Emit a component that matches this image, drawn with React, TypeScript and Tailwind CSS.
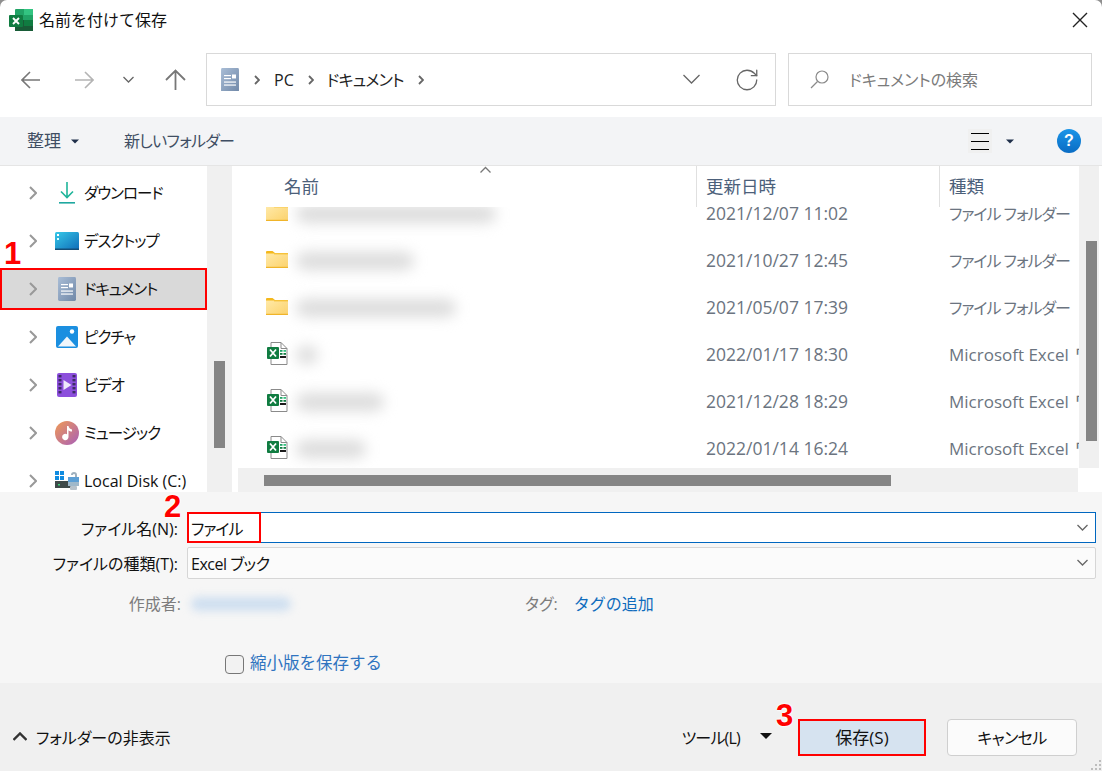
import { RotateCw } from "lucide-react"

const sidebarItems = [
  { name: "ダウンロード", icon: <DownloadIcon /> },
  { name: "デスクトップ", icon: <DesktopIcon /> },
  { name: "ドキュメント", icon: <DocIcon />, active: true },
  { name: "ピクチャ", icon: <PictureIcon /> },
  { name: "ビデオ", icon: <VideoIcon /> },
  { name: "ミュージック", icon: <MusicIcon /> },
  { name: "Local Disk (C:)", icon: <DiskIcon />, latin: true },
]

const files = [
  { kind: "folder", blur: 200, date: "2021/12/07 11:02" },
  { kind: "folder", blur: 118, date: "2021/10/27 12:45" },
  { kind: "folder", blur: 160, date: "2021/05/07 17:39" },
  { kind: "excel", blur: 22, date: "2022/01/17 18:30" },
  { kind: "excel", blur: 88, date: "2021/12/28 18:29" },
  { kind: "excel", blur: 70, date: "2022/01/14 16:24" },
]

function ExcelLogo() {
  return (
    <svg width="24" height="22" viewBox="0 0 24 22">
      <rect x="6" y="0" width="18" height="22" rx="1" fill="#21a366" />
      <rect x="15" y="0" width="9" height="6" fill="#33c481" />
      <rect x="15" y="11" width="9" height="6" fill="#107c41" />
      <rect x="6" y="11" width="9" height="11" fill="#185c37" />
      <rect x="15" y="17" width="9" height="5" fill="#185c37" />
      <rect x="0" y="6" width="14" height="12" rx="1" fill="#107c41" />
      <path d="M4 9l6 6M10 9l-6 6" stroke="#fff" strokeWidth="1.900" />
    </svg>
  )
}

function DocIcon({ size = 18 }: { size?: number }) {
  return (
    <svg width={size} height={size * 1.33} viewBox="0 0 18 24">
      <defs>
        <linearGradient id="docg" x1="0" y1="0" x2="1" y2="1">
          <stop offset="0" stopColor="#a9bdd6" />
          <stop offset="1" stopColor="#7088a8" />
        </linearGradient>
      </defs>
      <rect width="18" height="24" rx="1.500" fill="url(#docg)" />
      <rect x="3" y="7" width="7" height="1.200" fill="#fff" />
      <rect x="3" y="10" width="7" height="1.200" fill="#fff" />
      <rect x="3" y="13.500" width="12" height="1.200" fill="#fff" />
      <rect x="3" y="16.500" width="12" height="1.200" fill="#fff" />
      <rect x="11" y="6.500" width="4" height="4" fill="#fff" />
    </svg>
  )
}

function DownloadIcon() {
  return (
    <svg width="16" height="24" viewBox="0 0 16 24" fill="none">
      <path d="M8 1v15M2 10.500l6 6 6-6" stroke="#1fb59a" strokeWidth="1.600" />
      <rect y="21" width="16" height="1.600" fill="#1fa8a0" />
    </svg>
  )
}

function DesktopIcon() {
  return (
    <svg width="24" height="18" viewBox="0 0 24 18">
      <defs>
        <linearGradient id="deskg" x1="0" y1="0" x2="1" y2="1">
          <stop offset="0" stopColor="#36c8e8" />
          <stop offset="1" stopColor="#0f6cb8" />
        </linearGradient>
      </defs>
      <rect width="24" height="18" rx="1.500" fill="url(#deskg)" />
      <rect x="2" y="2" width="2" height="2" fill="#fff" />
      <rect x="2" y="6" width="2" height="2" fill="#dff" />
      <rect y="16.500" width="24" height="1.500" fill="#144e78" />
    </svg>
  )
}

function PictureIcon() {
  return (
    <svg width="22" height="22" viewBox="0 0 22 22">
      <rect width="22" height="22" rx="2" fill="#1b8fe0" />
      <circle cx="16" cy="5.500" r="2.200" fill="#fff" />
      <path d="M2 20.500 11 10.500l9 10z" fill="#f0f6fb" />
    </svg>
  )
}

function VideoIcon() {
  return (
    <svg width="20" height="24" viewBox="0 0 20 24">
      <rect width="20" height="24" rx="2" fill="#8c4fdc" />
      {[3, 7, 11, 15, 19].map((y) => (
        <g key={y}>
          <rect x="1.500" y={y - 1} width="3" height="2.400" fill="#3d2a66" />
          <rect x="15.500" y={y - 1} width="3" height="2.400" fill="#3d2a66" />
        </g>
      ))}
      <path d="M6.500 7v10l8-5z" fill="#eee8fb" />
    </svg>
  )
}

function MusicIcon() {
  return (
    <svg width="24" height="24" viewBox="0 0 24 24">
      <defs>
        <linearGradient id="musg" x1="0" y1="0" x2="1" y2="1">
          <stop offset="0" stopColor="#f09a55" />
          <stop offset="1" stopColor="#a85fb8" />
        </linearGradient>
      </defs>
      <circle cx="12" cy="12" r="12" fill="url(#musg)" />
      <path d="M12 5h1.500c.3 2 1.500 3 3.500 3.500v2c-1.500 0-2.800-.5-3.500-1.300V16a3.200 3.200 0 1 1-1.500-2.700z" fill="#fff" />
    </svg>
  )
}

function DiskIcon() {
  return (
    <svg width="24" height="20" viewBox="0 0 24 20">
      <rect x="0" y="0" width="4" height="4" fill="#0f8be0" />
      <rect x="5" y="0" width="4" height="4" fill="#0f8be0" />
      <rect x="0" y="5" width="4" height="4" fill="#0f8be0" />
      <rect x="5" y="5" width="4" height="4" fill="#0f8be0" />
      <rect y="10" width="16" height="7" fill="#3f4a4a" />
      <rect x="3" y="13" width="2" height="1.500" fill="#3fd47a" />
      <path d="M16 4a3 3 0 0 1 6 0v2h-2V4a1 1 0 0 0-2 0z" fill="#9fb0bd" />
      <rect x="13" y="6" width="11" height="5" fill="#5d9fd4" />
      <rect x="13" y="11" width="11" height="4" fill="#9fb8ca" />
      <rect x="15" y="15" width="7" height="4" rx="1" fill="#b8c2ca" />
    </svg>
  )
}

function FolderIcon({ clipped }: { clipped?: boolean }) {
  return (
    <svg width="22" height="17" viewBox="0 0 22 17">
      <defs>
        <linearGradient id="foldg" x1="0" y1="0" x2="1" y2="1">
          <stop offset="0" stopColor="#ffe9a8" />
          <stop offset="1" stopColor="#fcd26a" />
        </linearGradient>
      </defs>
      {!clipped && <path d="M0 1a1 1 0 0 1 1-1h5.500L9 2h13v4H0z" fill="#f4b81c" />}
      <rect y="2.500" width="22" height="14.500" fill="url(#foldg)" />
      <rect y="15.800" width="22" height="1.200" fill="#f0b429" />
      <rect y="2.500" x="8" width="14" height="0.800" fill="#f4b81c" />
    </svg>
  )
}

function ExcelFileIcon() {
  return (
    <svg width="21" height="23" viewBox="0 0 21 23" fill="none">
      <path d="M4 .500h10l6 6v16H4z" fill="#fff" stroke="#8a8a8a" />
      <path d="M14 .500v6h6" stroke="#8a8a8a" />
      <rect x="13" y="8" width="2.500" height="1.800" fill="#21a366" />
      <rect x="16.500" y="8" width="2.500" height="1.800" fill="#33c481" />
      <rect x="13" y="11" width="2.500" height="1.800" fill="#107c41" />
      <rect x="16.500" y="11" width="2.500" height="1.800" fill="#107c41" />
      <rect x="13" y="14" width="6" height="2" fill="#1a1a1a" />
      <rect x="0" y="5" width="12" height="12" rx="1" fill="#107c41" />
      <path d="M3 7.500l6 7M9 7.500l-6 7" stroke="#fff" strokeWidth="1.800" />
    </svg>
  )
}

function Caret({ className }: { className: string }) {
  return (
    <svg className={className} width="12" height="6" viewBox="0 0 12 6">
      <path d="M0 0h12L6 6z" fill="currentColor" />
    </svg>
  )
}

// thin open chevron pointing down, sized by width
function DownChevron({ w, className, stroke = 1.3 }: { w: number; className?: string; stroke?: number }) {
  return (
    <svg className={className} width={w} height={w / 2 + 2} viewBox={`0 0 ${w} ${w / 2 + 2}`} fill="none" stroke="currentColor" strokeWidth={stroke}>
      <path d={`M0.500 1 ${w / 2} ${w / 2 + 0.500} ${w - 0.500} 1`} />
    </svg>
  )
}

function RightChevron({ className }: { className?: string }) {
  return (
    <svg className={className} width="8" height="14" viewBox="0 0 8 14" fill="none" stroke="currentColor" strokeWidth="2">
      <path d="M1 1l6 6-6 6" />
    </svg>
  )
}

function CrumbChevron({ className }: { className?: string }) {
  return (
    <svg className={className} width="6" height="10" viewBox="0 0 6 10" fill="none" stroke="#666" strokeWidth="1.800">
      <path d="M1 1l4 4-4 4" />
    </svg>
  )
}

function Badge({ n, className }: { n: number; className: string }) {
  return (
    <span
      className={`absolute font-['Liberation_Sans',sans-serif] text-[31px] leading-none font-bold text-[#ff0000] [text-shadow:0_0_2px_#fff,0_0_2px_#fff,0_0_3px_#fff] ${className}`}
    >
      {n}
    </span>
  )
}

export default function App() {
  return (
    <div className="h-[771px] w-[1102px] bg-[#8f8f8f]">
      <div className="relative h-full w-full overflow-hidden rounded-t-[7px] bg-white font-['Open_Sans','Noto_Sans_CJK_JP',sans-serif] text-[16px] [font-feature-settings:'palt']">
        {/* Title bar */}
        <div className="flex h-10 items-center pl-[9px] pr-[14px]">
          <ExcelLogo />
          <span className="ml-[6px] flex-1 text-[#111] [font-feature-settings:normal]">名前を付けて保存</span>
          <svg width="16" height="16" viewBox="0 0 16 16" stroke="#222" strokeWidth="1.400">
            <path d="M1 1l14 14M15 1 1 15" />
          </svg>
        </div>

        {/* Nav row */}
        <div className="flex h-[77px] items-start pt-[13px] pr-[10px]">
          <div className="flex h-[53px] w-[206px] items-center text-[#777]">
            <svg className="ml-[21px]" width="19" height="18" viewBox="0 0 19 18" fill="none" stroke="currentColor" strokeWidth="1.600">
              <path d="M19 9H1M9 1 1 9l8 8" />
            </svg>
            <svg className="ml-[35px] text-[#b4b4b4]" width="19" height="18" viewBox="0 0 19 18" fill="none" stroke="currentColor" strokeWidth="1.600">
              <path d="M0 9h18M10 1l8 8-8 8" />
            </svg>
            <DownChevron w={11} className="ml-[29px] text-[#666]" />
            <svg className="ml-[31px]" width="21" height="21" viewBox="0 0 21 21" fill="none" stroke="currentColor" strokeWidth="1.800">
              <path d="M10.500 21V2M1 11l9.500-9.500L20 11" />
            </svg>
          </div>
          <div className="flex h-[53px] w-[570px] items-center border border-[#d9d9d9] pl-[14px] pr-[15px] text-[#222]">
            <DocIcon />
            <CrumbChevron className="ml-[15px]" />
            <span className="ml-[14px]">PC</span>
            <CrumbChevron className="ml-[14px]" />
            <span className="ml-[13px] tracking-[-0.8px]">ドキュメント</span>
            <CrumbChevron className="ml-[14px]" />
            <DownChevron w={17} className="ml-auto text-[#666]" />
            <RotateCw className="ml-[34px] h-[26px] w-[26px] text-[#666]" strokeWidth={1.2} />
          </div>
          <div className="ml-3 flex h-[53px] flex-1 items-center border border-[#d9d9d9] pl-[21px] text-[#7b7b7b]">
            <svg width="19" height="19" viewBox="0 0 19 19" fill="none" stroke="#8a8a8a" strokeWidth="1.200">
              <circle cx="12" cy="7" r="6" />
              <path d="M7.500 11.500 1 18" />
            </svg>
            <span className="ml-[20px]">ドキュメントの検索</span>
          </div>
        </div>

        {/* Toolbar */}
        <div className="flex h-[49px] items-center border-b border-[#e5e5e5] bg-[#f3f4f6] pl-[27px] pr-[21px] text-[#3f4e63]">
          <span className="text-[17px] [font-feature-settings:normal]">整理</span>
          <Caret className="ml-[10px] h-[5px] w-[8px] text-[#1f2f4a]" />
          <span className="ml-[45px] tracking-[-0.7px]">新しいフォルダー</span>
          <div className="ml-auto flex h-6 w-6 flex-col justify-center gap-[7px] bg-[#f0f0f0] px-[3px]">
            <div className="h-px bg-black" />
            <div className="h-px bg-black" />
            <div className="h-px bg-black" />
          </div>
          <Caret className="ml-[14px] h-[5px] w-[8px] text-[#1f2f4a]" />
          <div className="ml-[43px] flex h-6 w-6 items-center justify-center rounded-full bg-gradient-to-b from-[#1b95e8] to-[#0a6cc4] font-['Liberation_Sans',sans-serif] text-[16px] font-bold text-white">
            ?
          </div>
        </div>

        {/* Body */}
        <div className="flex h-[326px]">
          {/* Sidebar */}
          <div className="h-full w-[207px] overflow-hidden pt-[3px] text-[#111]">
            {sidebarItems.map((item) => (
              <div key={item.name} className="flex h-[48px] items-center">
                <div
                  className={
                    item.active
                      ? "flex h-[42px] w-full items-center border-2 border-[#ff0000] bg-[#d9d9d9] pl-[26px]"
                      : "flex h-[42px] w-full items-center pl-[28px]"
                  }
                >
                  <div className="flex w-[12px] justify-start pl-px">
                    <RightChevron className="text-[#999]" />
                  </div>
                  <div className="flex w-[44px] justify-center pl-[10px]">{item.icon}</div>
                  <span className={item.latin ? "whitespace-nowrap" : "mt-[2px] whitespace-nowrap text-[15.5px] tracking-[-1px]"}>{item.name}</span>
                </div>
              </div>
            ))}
          </div>

          {/* Sidebar scrollbar */}
          <div className="h-full w-[25px] bg-[#f0f0f0] pt-[195px] pl-[7px]">
            <div className="h-[87px] w-[11px] bg-[#858585]" />
          </div>

          {/* File list */}
          <div className="ml-[6px] flex h-full min-w-0 flex-1 flex-col">
            <div className="flex min-h-0 flex-1">
              <div className="flex min-w-0 flex-1 flex-col">
                <div className="relative flex h-[41px] shrink-0 text-[17.5px] text-[#4c607a] [font-feature-settings:normal]">
                  <DownChevron w={11} className="absolute left-[242px] top-0 rotate-180 text-[#777]" />
                  <div className="w-[458px] pl-[46px] pt-[7px]">名前</div>
                  <div className="w-[243px] border-l border-[#e0e0e0] pl-[9px] pt-[7px]">更新日時</div>
                  <div className="flex-1 border-l border-[#e0e0e0] pl-[9px] pt-[7px]">種類</div>
                </div>
                <div className="min-h-0 flex-1 overflow-hidden text-[#6b7480]">
                  <div className="-mt-[17px]">
                    {files.map((f, i) => (
                      <div key={f.date} className="flex h-[47px] items-center">
                        <div className="flex w-[458px] items-center pl-[28px]">
                          <div className="-mt-[2px] flex h-[22px] w-[22px] items-center justify-center">
                            {f.kind === "folder" ? <FolderIcon clipped={i === 0} /> : <ExcelFileIcon />}
                          </div>
                          <div className="ml-[8px] h-[18px] rounded-full bg-[#dcdcdc] blur-[7px]" style={{ width: f.blur }} />
                        </div>
                        <div className="w-[243px] pl-[10px] text-[17.5px] whitespace-nowrap">{f.date}</div>
                        {f.kind === "folder" ? (
                          <div className="min-w-0 flex-1 overflow-hidden pl-[10px] tracking-[-1px] whitespace-nowrap">ファイル フォルダー</div>
                        ) : (
                          <div className="min-w-0 flex-1 overflow-hidden pl-[10px] text-[17px] whitespace-nowrap">
                            Microsoft Excel <span className="ml-[2px]">ワークシート</span>
                          </div>
                        )}
                      </div>
                    ))}
                  </div>
                </div>
              </div>
              <div className="h-full w-[20px] bg-[#f0f0f0] pt-[75px] pl-[7px]">
                <div className="h-[200px] w-[11px] bg-[#858585]" />
              </div>
              <div className="w-[3px]" />
            </div>
            <div className="mr-[24px] flex h-[24px] shrink-0 items-center bg-[#f0f0f0] pl-[26px]">
              <div className="h-[11px] w-[627px] bg-[#858585]" />
            </div>
          </div>
        </div>

        {/* Form */}
        <div className="h-[191px] bg-[#f6f6f6] pt-5 text-[#111]">
          <div className="flex h-[31px] items-center">
            <span className="mt-[2px] w-[178px] text-right whitespace-nowrap">ファイル名(N):</span>
            <div className="relative ml-[9px] flex h-[31px] w-[909px] items-center border border-[#0067c0] bg-white pl-[3px] pr-[7px]">
              <span className="mt-[2px] flex-1 tracking-[-1px]">ファイル</span>
              <DownChevron w={11} className="text-[#666]" />
              <div className="absolute -left-px -top-px h-[31px] w-[74px] border-2 border-[#ff0000]" />
            </div>
          </div>
          <div className="mt-[4px] flex h-[32px] items-center">
            <span className="mt-[2px] w-[178px] text-right whitespace-nowrap">ファイルの種類(T):</span>
            <div className="ml-[9px] flex h-[32px] w-[909px] items-center rounded-[2px] border border-[#d6d6d6] bg-[#fbfbfb] pl-[3px] pr-[7px]">
              <span className="mt-[2px] flex-1 tracking-[-0.5px]">Excel ブック</span>
              <DownChevron w={11} className="text-[#666]" />
            </div>
          </div>
          <div className="mt-[9px] flex h-[32px] items-center">
            <span className="w-[181px] text-right text-[#7d7d7d] [font-feature-settings:normal]">作成者:</span>
            <div className="ml-[10px] h-[14px] w-[100px] rounded-full bg-[#cfdff0] blur-[4px]" />
            <span className="ml-[234px] text-[#7d7d7d]">タグ:</span>
            <span className="ml-[16px] text-[#0f6cbd] [font-feature-settings:normal]">タグの追加</span>
          </div>
          <div className="mt-[34px] flex h-[20px] items-center pl-[225px]">
            <div className="h-[19px] w-[19px] rounded-[4px] border border-[#777] bg-[#f2f2f2]" />
            <span className="-mt-[2px] ml-[6px] text-[16.5px] text-[#2f74c0] [font-feature-settings:normal]">縮小版を保存する</span>
          </div>
        </div>

        {/* Footer */}
        <div className="relative flex h-[88px] items-start bg-[#f0f0f0] pt-[36px] pl-[13px] pr-[25px] text-[#111]">
          <DownChevron w={14} stroke={2.4} className="mt-[13px] rotate-180 text-[#333]" />
          <span className="ml-[9px] mt-[7px]">フォルダーの非表示</span>
          <span className="ml-auto mt-[7px] tracking-[-0.8px]">ツール(L)</span>
          <Caret className="ml-[20px] mt-[14px] text-[#111]" />
          <button className="ml-[26px] h-[37px] w-[128px] border-2 border-[#ff0000] bg-[#d6e3f0] text-[17px] text-[#111] [font-feature-settings:normal]">保存(S)</button>
          <button className="ml-[21px] h-[37px] w-[130px] rounded-[4px] border border-[#cfcfcf] bg-[#fbfbfb] tracking-[-0.6px] text-[#111]">キャンセル</button>
          <svg className="absolute right-[1px] bottom-[1px]" width="10" height="10" viewBox="0 0 10 10" fill="#bdbdbd">
            <rect x="8" y="0" width="2" height="2" />
            <rect x="4" y="4" width="2" height="2" />
            <rect x="8" y="4" width="2" height="2" />
            <rect x="0" y="8" width="2" height="2" />
            <rect x="4" y="8" width="2" height="2" />
            <rect x="8" y="8" width="2" height="2" />
          </svg>
        </div>

        {/* Step numbers */}
        <Badge n={1} className="left-[4px] top-[238px]" />
        <Badge n={2} className="left-[164px] top-[491px]" />
        <Badge n={3} className="left-[776px] top-[700px]" />
      </div>
    </div>
  )
}
